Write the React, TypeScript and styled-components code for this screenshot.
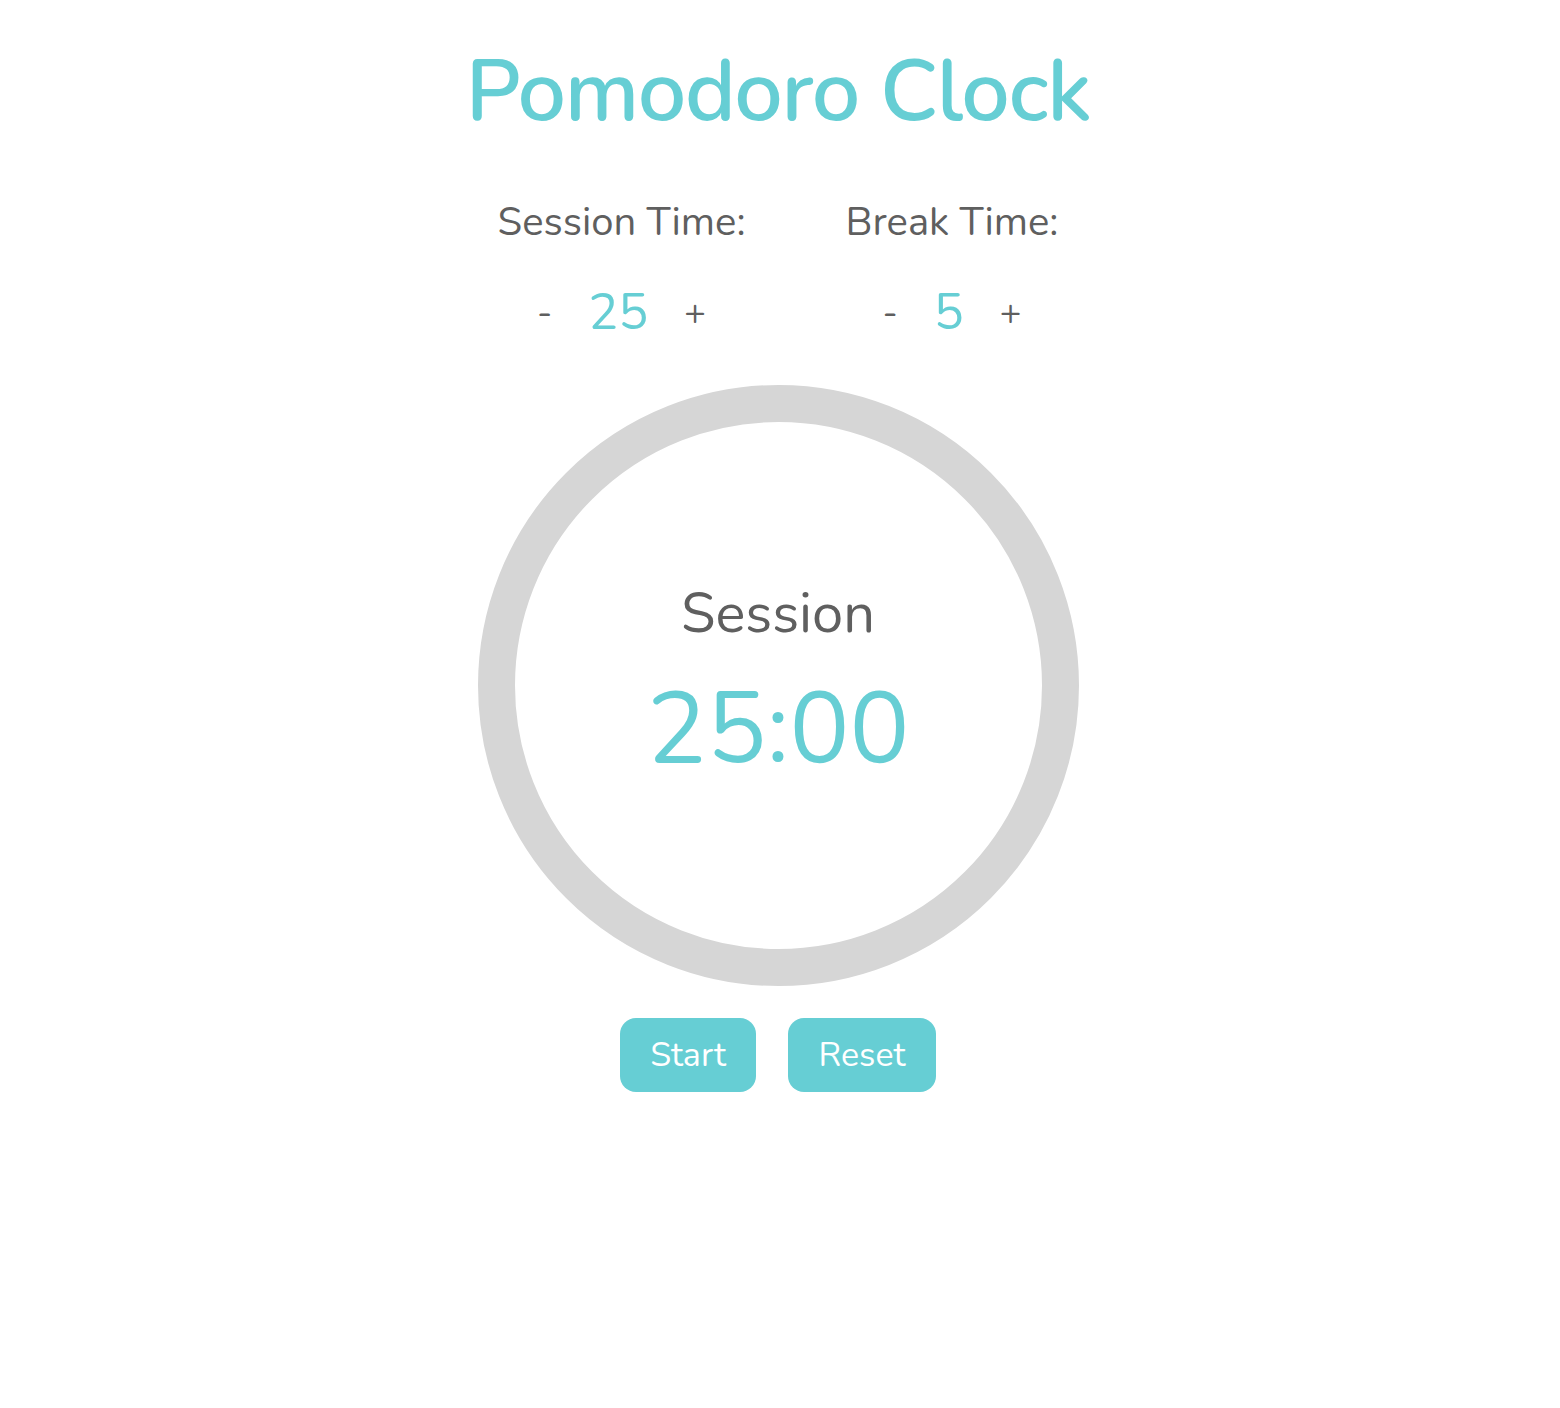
import React, { useState } from "react";
import styled, { createGlobalStyle } from "styled-components";

const TEAL = "#66ced4";
const GREY = "#5f5f5f";
const RING = "#d6d6d6";

const Global = createGlobalStyle`
  html, body { margin: 0; padding: 0; background: #ffffff; }
  body { font-family: "Nunito", "Lato", "Open Sans", sans-serif; }
`;

const Page = styled.main`
  display: flex;
  flex-direction: column;
  align-items: center;
  padding-top: 49px;
  padding-right: 4px;
  min-height: 1408px;
  box-sizing: border-box;
`;

const Title = styled.h1`
  margin: 0;
  font-size: 86px;
  line-height: 1;
  font-weight: 600;
  color: ${TEAL};
  letter-spacing: -1.4px;
`;

const Settings = styled.section`
  display: flex;
  gap: 100px;
  margin-top: 67px;
`;

const Setting = styled.div`
  display: flex;
  flex-direction: column;
  align-items: center;
`;

const Label = styled.div`
  font-size: 40px;
  line-height: 1;
  color: ${GREY};
`;

const Controls = styled.div`
  display: flex;
  align-items: center;
  gap: 36px;
  margin-top: 46px;
`;

const Step = styled.button`
  border: none;
  background: none;
  padding: 0;
  font-family: inherit;
  font-size: 36px;
  line-height: 1;
  color: ${GREY};
  cursor: pointer;
`;

const Value = styled.span`
  font-size: 50px;
  line-height: 1;
  color: ${TEAL};
`;

const Dial = styled.div`
  margin-top: 47px;
  width: 601px;
  height: 601px;
  display: grid;
  place-items: center;
  position: relative;
`;

const Ring = styled.svg`
  position: absolute;
  inset: 0;
`;

const Readout = styled.div`
  position: relative;
  display: flex;
  flex-direction: column;
  align-items: center;
  margin-top: -6px;
`;

const Phase = styled.div`
  font-size: 56px;
  line-height: 1;
  color: ${GREY};
`;

const Time = styled.div`
  font-size: 100px;
  line-height: 1;
  color: ${TEAL};
  margin-top: 37px;
`;

const Buttons = styled.div`
  display: flex;
  gap: 32px;
  margin-top: 32px;
`;

const Action = styled.button<{ $w: number }>`
  width: ${(p) => p.$w}px;
  height: 74px;
  border: none;
  border-radius: 16px;
  background: ${TEAL};
  color: #ffffff;
  font-family: inherit;
  font-size: 34px;
  cursor: pointer;
`;

export default function App() {
  const [session, setSession] = useState(25);
  const [brk, setBrk] = useState(5);
  return (
    <>
      <Global />
      <Page>
        <Title>Pomodoro Clock</Title>
        <Settings>
          <Setting>
            <Label>Session Time:</Label>
            <Controls>
              <Step onClick={() => setSession((s) => Math.max(1, s - 1))}>-</Step>
              <Value>{session}</Value>
              <Step onClick={() => setSession((s) => s + 1)}>+</Step>
            </Controls>
          </Setting>
          <Setting>
            <Label>Break Time:</Label>
            <Controls>
              <Step onClick={() => setBrk((s) => Math.max(1, s - 1))}>-</Step>
              <Value>{brk}</Value>
              <Step onClick={() => setBrk((s) => s + 1)}>+</Step>
            </Controls>
          </Setting>
        </Settings>
        <Dial>
          <Ring width="601" height="601" viewBox="0 0 601 601">
            <circle cx="300.5" cy="300.5" r="282" fill="none" stroke={RING} strokeWidth="37" />
          </Ring>
          <Readout>
            <Phase>Session</Phase>
            <Time>{String(session).padStart(2, "0")}:00</Time>
          </Readout>
        </Dial>
        <Buttons>
          <Action $w={136}>Start</Action>
          <Action $w={148}>Reset</Action>
        </Buttons>
      </Page>
    </>
  );
}
